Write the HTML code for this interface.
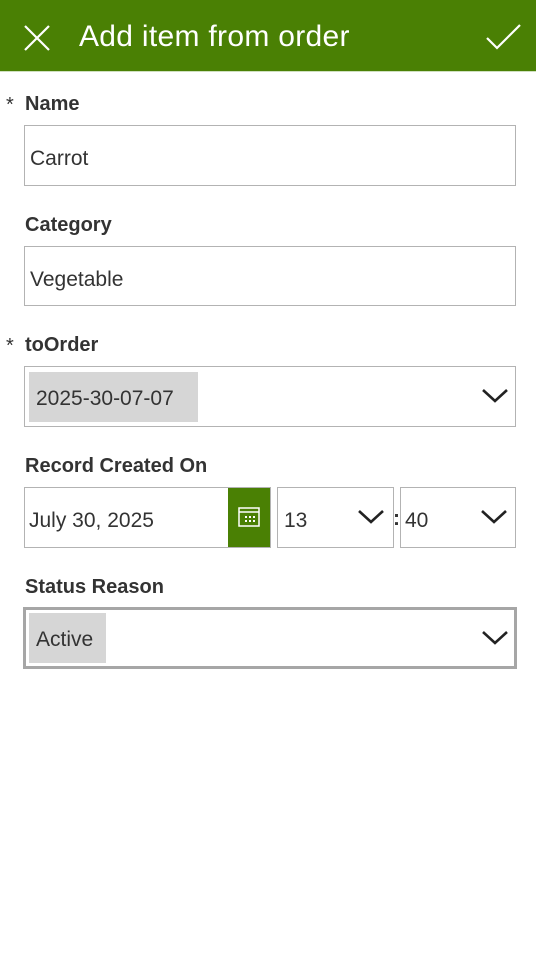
<!DOCTYPE html>
<html><head><style>
body{margin:0;width:536px;height:957px;background:#fff;font-family:"Liberation Sans",sans-serif;color:#333;position:relative;overflow:hidden}
.a{position:absolute}
.hdr{left:0;top:0;width:536px;height:72px;background:#4a8004;border-bottom:1px solid #cfe0bf;box-sizing:border-box}
.lbl{font-weight:bold;font-size:20px;color:#333;left:25px}
.star{left:6px;font-size:20px}
.box{border:1px solid #b3b3b3;box-sizing:border-box;background:#fff}
.txt{font-size:21px;color:#333}
.tag{background:#d6d6d6;font-size:21px;color:#333;display:flex;align-items:center;padding-left:7px;box-sizing:border-box}
</style></head><body>
<div class="a hdr"></div>
<svg class="a" style="left:24px;top:25px" width="26" height="26"><path d="M1 1L25 25M25 1L1 25" stroke="#fff" stroke-width="2.2"/></svg>
<div class="a" style="left:79px;top:20px;font-size:30px;color:#fff;letter-spacing:0.3px">Add item from order</div>
<svg class="a" style="left:486px;top:23px" width="36" height="28"><path d="M1 15L11 25L34 2" stroke="#fff" stroke-width="2.2" fill="none"/></svg>

<div class="a star" style="top:94px">*</div>
<div class="a lbl" style="top:93px">Name</div>
<div class="a box" style="left:24px;top:125px;width:492px;height:61px"></div>
<div class="a txt" style="left:30px;top:147px">Carrot</div>

<div class="a lbl" style="top:214px">Category</div>
<div class="a box" style="left:24px;top:246px;width:492px;height:60px"></div>
<div class="a txt" style="left:30px;top:268px">Vegetable</div>

<div class="a star" style="top:335px">*</div>
<div class="a lbl" style="top:334px">toOrder</div>
<div class="a box" style="left:24px;top:366px;width:492px;height:61px"></div>
<div class="a tag" style="left:29px;top:372px;width:169px;height:50px;padding-top:3px">2025-30-07-07</div>
<svg class="a" style="left:481px;top:388px" width="28" height="16"><path d="M2 2L14 13L26 2" stroke="#222" stroke-width="2.6" fill="none"/></svg>

<div class="a lbl" style="top:455px">Record Created On</div>
<div class="a box" style="left:24px;top:487px;width:247px;height:61px"></div>
<div class="a txt" style="left:29px;top:509px">July 30, 2025</div>
<div class="a" style="left:228px;top:488px;width:42px;height:59px;background:#4a8004"></div>
<svg class="a" style="left:238px;top:507px" width="22" height="20"><rect x="1" y="1" width="20" height="18" fill="none" stroke="#fff" stroke-width="1.5"/><line x1="1" y1="5" x2="21" y2="5" stroke="#fff" stroke-width="1.5"/><g fill="#fff"><rect x="7" y="9" width="2" height="2"/><rect x="11" y="9" width="2" height="2"/><rect x="15" y="9" width="2" height="2"/><rect x="7" y="13" width="2" height="2"/><rect x="11" y="13" width="2" height="2"/><rect x="15" y="13" width="2" height="2"/></g></svg>
<div class="a box" style="left:277px;top:487px;width:117px;height:61px"></div>
<div class="a txt" style="left:284px;top:509px">13</div>
<svg class="a" style="left:357px;top:509px" width="28" height="16"><path d="M2 2L14 13L26 2" stroke="#222" stroke-width="2.6" fill="none"/></svg>
<div class="a txt" style="left:393px;top:507px;font-weight:bold">:</div>
<div class="a box" style="left:400px;top:487px;width:116px;height:61px"></div>
<div class="a txt" style="left:405px;top:509px">40</div>
<svg class="a" style="left:480px;top:509px" width="28" height="16"><path d="M2 2L14 13L26 2" stroke="#222" stroke-width="2.6" fill="none"/></svg>

<div class="a lbl" style="top:576px">Status Reason</div>
<div class="a box" style="left:23px;top:607px;width:494px;height:62px;border:3px solid #a6a6a6"></div>
<div class="a tag" style="left:29px;top:613px;width:77px;height:50px;padding-top:3px">Active</div>
<svg class="a" style="left:481px;top:630px" width="28" height="16"><path d="M2 2L14 13L26 2" stroke="#222" stroke-width="2.6" fill="none"/></svg>
</body></html>
